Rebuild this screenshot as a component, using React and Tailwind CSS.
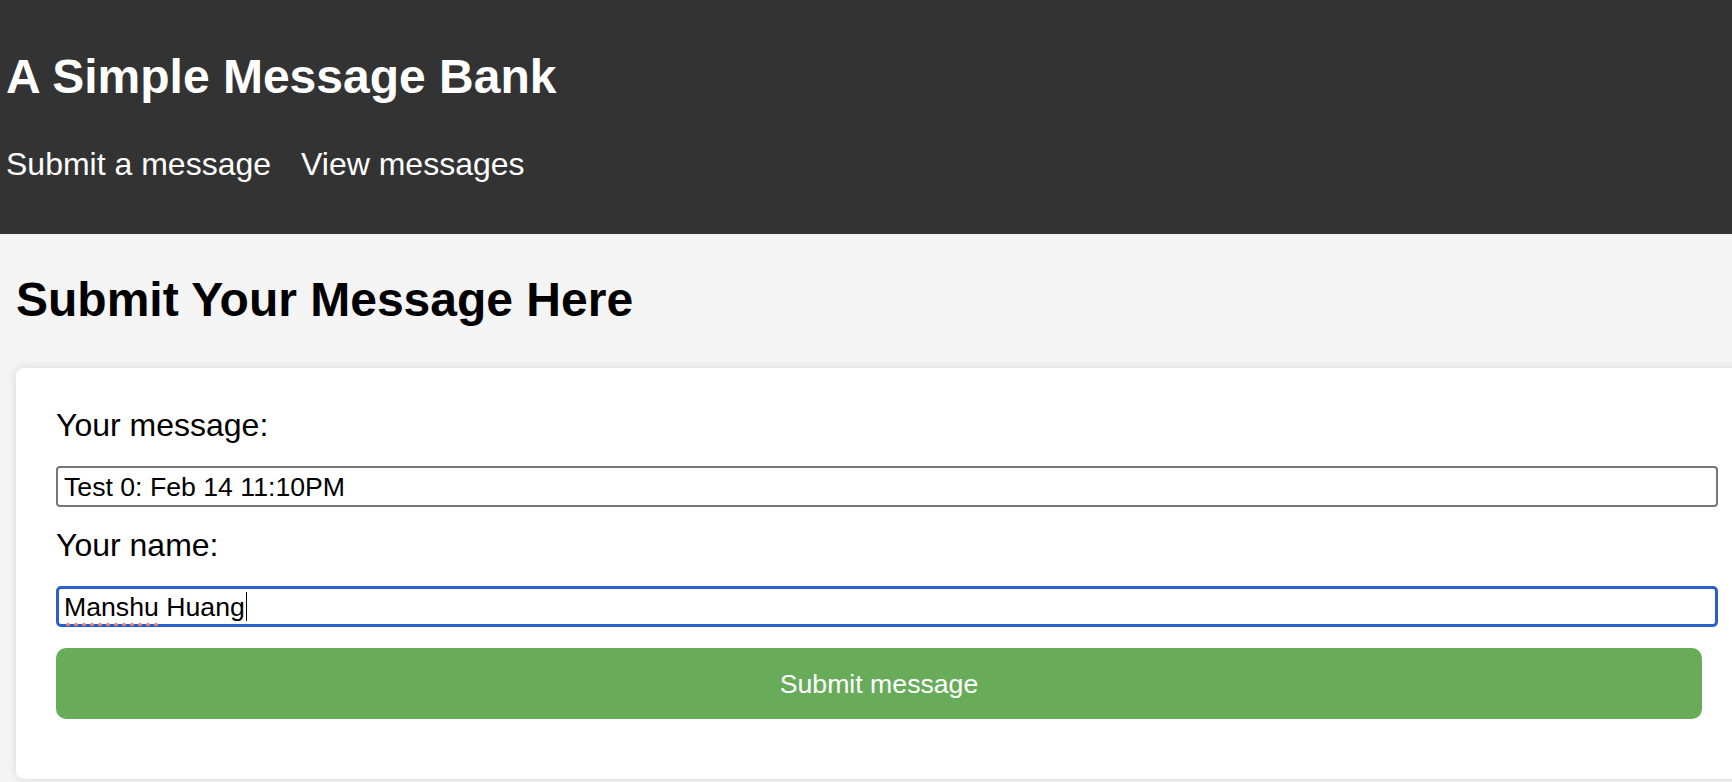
export default function App() {
  return (
    <div
      className="min-h-screen bg-[#f4f4f4] overflow-hidden"
      style={{ fontFamily: '"Liberation Sans", Arial, Helvetica, sans-serif' }}
    >
      <header className="bg-[#333333] text-white h-[234px] pl-[6px] pt-[49px]">
        <h1 className="text-[48px] leading-[56px] font-bold">A Simple Message Bank</h1>
        <nav className="mt-[41px] flex gap-[30px] text-[32px] leading-[37px]">
          <a className="text-white" href="#">Submit a message</a>
          <a className="text-white" href="#">View messages</a>
        </nav>
      </header>
      <main className="pl-4 pt-[38px]">
        <h2 className="text-[48px] leading-[56px] font-bold text-black">Submit Your Message Here</h2>
        <form
          className="mt-[40px] w-[1760px] bg-white rounded-[8px] shadow-[0_0_10px_rgba(0,0,0,0.12)] pl-[40px] pt-[40px] pb-[60px]"
          onSubmit={(e) => e.preventDefault()}
        >
          <label className="block text-[32px] leading-[35px] text-black">Your message:</label>
          <div className="mt-[23px] w-[1662px] h-[41px] border-2 border-[#767676] rounded-[4px] px-[6px] flex items-center text-[26.67px] text-black">
            Test 0: Feb 14 11:10PM
          </div>
          <label className="block mt-[21px] text-[32px] leading-[35px] text-black">Your name:</label>
          <div className="mt-[23px] w-[1662px] h-[41px] border-[3px] border-[#2b5fc9] rounded-[5px] px-[5px] flex items-center text-[26.67px] text-black">
            <span className="bg-[radial-gradient(circle,#ef7f70_1.6px,transparent_2px)] bg-[length:8px_5px] bg-repeat-x bg-[position:0_100%]">Manshu</span>
            <span>&nbsp;Huang</span>
            <span className="inline-block ml-[1px] w-[1.5px] h-[29px] bg-black"></span>
          </div>
          <button
            type="submit"
            className="mt-[21px] w-[1646px] h-[71px] rounded-[10px] bg-[#68ac5a] text-white text-[26.67px] flex items-center justify-center"
          >
            Submit message
          </button>
        </form>
      </main>
    </div>
  );
}
